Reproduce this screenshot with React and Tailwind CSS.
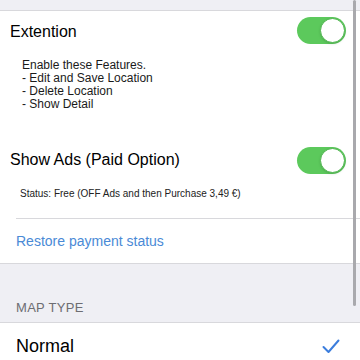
import React from 'react'

function Toggle() {
  return (
    <div className="w-[49px] h-[27px] rounded-full bg-[#5cc95c] flex items-center justify-end pr-[1px]">
      <div className="w-[25px] h-[25px] rounded-full bg-white border border-[#4fb54f] shadow-sm" />
    </div>
  )
}

function Check() {
  return (
    <svg width="18" height="15" viewBox="0 0 18 15" fill="none">
      <path d="M1.5 8 L6.5 13 L16.5 1.5" stroke="#3b7ddd" strokeWidth="2" strokeLinecap="round" strokeLinejoin="round" />
    </svg>
  )
}

export default function App() {
  return (
    <div className="relative w-[360px] h-[360px] overflow-hidden bg-[#efeff4] text-black" style={{ fontFamily: '"Liberation Sans", Arial, sans-serif' }}>
      {/* scroll indicator */}
      <div className="absolute right-[4px] top-0 w-[3px] h-[306px] rounded-full bg-[#a9a9ad]" />

      <div className="h-[11px] border-b border-[#d8d8dc]" />

      <div className="bg-white border-b border-[#d8d8dc]">
        <div className="h-[42px] pl-[10px] pr-[14px] flex items-center justify-between">
          <span className="text-[16px] leading-[20px]">Extention</span>
          <div className="-mt-[3px]"><Toggle /></div>
        </div>
        <div className="pl-[22px] mt-[6px] text-[12px] leading-[13px] text-[#1a1a1a]">
          <div>Enable these Features.</div>
          <div>- Edit and Save Location</div>
          <div>- Delete Location</div>
          <div>- Show Detail</div>
        </div>
        <div className="h-[38px] mt-[30px] pl-[10px] pr-[14px] flex items-center justify-between">
          <span className="text-[16px] leading-[20px]">Show Ads (Paid Option)</span>
          <Toggle />
        </div>
        <div className="pl-[20px] mt-[9px] pb-[18px] text-[10px] leading-[12px] text-[#222]">
          Status: Free (OFF Ads and then Purchase 3,49 €)
        </div>
        <div className="ml-[16px] border-t border-[#d8d8dc]" />
        <div className="h-[44px] pl-[16px] flex items-center">
          <span className="text-[14px] leading-[18px] text-[#4a8ad6]">Restore payment status</span>
        </div>
      </div>

      <div className="h-[58px] pl-[16px] flex items-end pb-[6px]">
        <span className="text-[13px] leading-[16px] text-[#6d6d72] tracking-[0.3px]">MAP TYPE</span>
      </div>

      <div className="bg-white border-t border-[#d8d8dc] h-[60px] pl-[16px] pr-[20px] pt-[12px] flex items-start justify-between">
        <span className="text-[18px] leading-[22px]">Normal</span>
        <div className="mt-[4px]"><Check /></div>
      </div>
    </div>
  )
}
